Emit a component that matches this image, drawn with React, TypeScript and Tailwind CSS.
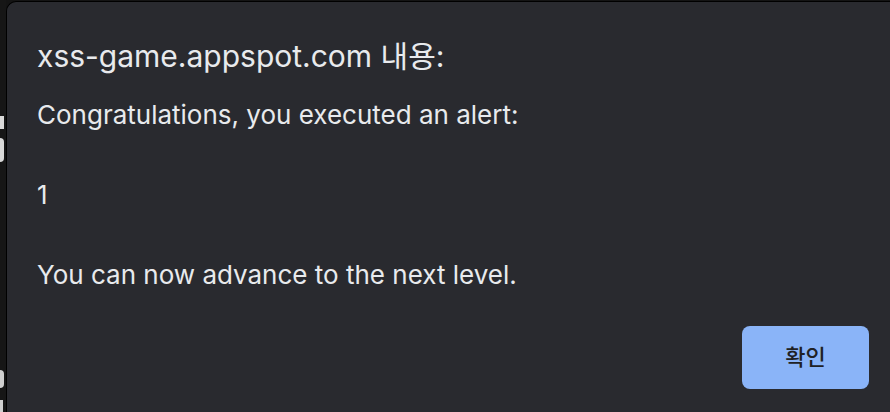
export default function App() {
  return (
    <div className="flex h-[412px] w-[890px] overflow-hidden bg-[#141414]" style={{ fontFamily: 'Inter, "Noto Sans CJK KR", sans-serif' }}>
      {/* page behind the dialog */}
      <div className="relative w-[6px] shrink-0 bg-[#161616]">
        <div className="absolute left-0 top-[116px] h-[13px] w-[4px] bg-[#d9d9d9]" />
        <div className="absolute left-0 top-[138px] h-[24px] w-[4px] rounded-r bg-[#d9d9d9]" />
        <div className="absolute left-0 top-[370px] h-[18px] w-[4px] rounded-r bg-[#cfcfcf]" />
        <div className="absolute left-0 top-[400px] h-[12px] w-[3px] bg-[#cfcfcf]" />
      </div>
      <div className="mt-px flex flex-1 flex-col rounded-tl-[10px] border-l border-t border-black bg-[#292a2f] pl-[30px] pr-[21px] text-[#e8eaed]">
        <h1 className="mt-[35px] text-[30px] leading-[38px]">xss-game.appspot.com 내용:</h1>
        <div className="mt-[25px] text-[26px] leading-[30px]">
          <p>Congratulations, you executed an alert:</p>
          <p className="mt-[50px]">1</p>
          <p className="mt-[50px]">You can now advance to the next level.</p>
        </div>
        <div className="mt-[36px] flex justify-end">
          <button className="h-[63px] w-[127px] rounded-[8px] bg-[#8ab4f8] text-[22px] font-medium text-[#202124]">확인</button>
        </div>
      </div>
    </div>
  )
}
